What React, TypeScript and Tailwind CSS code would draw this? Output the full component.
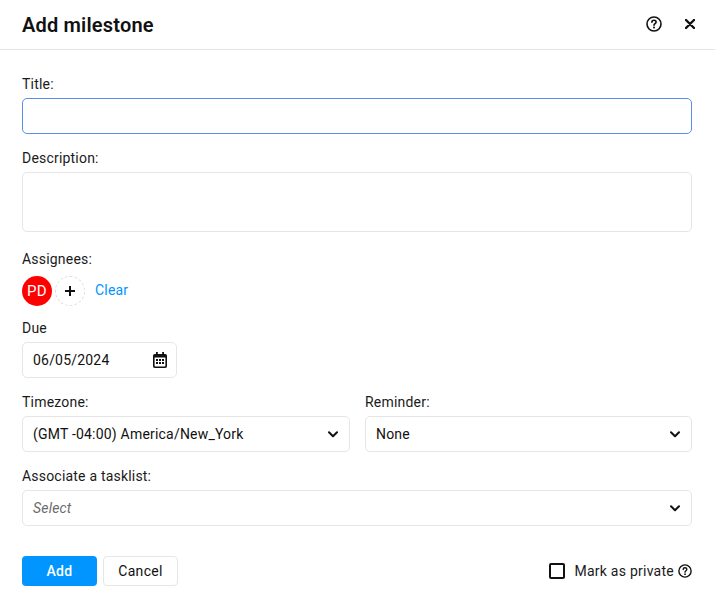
import React from "react";

const Chevron = () => (
  <svg width="10" height="7" viewBox="0 0 10 7" fill="none" className="shrink-0">
    <path d="M1 1.2 5 5.2l4-4" stroke="#111" strokeWidth="2" strokeLinecap="round" strokeLinejoin="round" />
  </svg>
);

const Help = ({ size }: { size: number }) => (
  <svg width={size} height={size} viewBox="0 0 16 16" fill="none" className="shrink-0">
    <circle cx="8" cy="8" r="7" stroke="#111" strokeWidth="1.6" />
    <path d="M5.9 6.2c0-1.2.9-1.9 2.1-1.9s2.1.7 2.1 1.8c0 1.6-2.1 1.6-2.1 3.2" stroke="#111" strokeWidth="1.6" strokeLinecap="round" />
    <circle cx="8" cy="11.6" r="1" fill="#111" />
  </svg>
);

const Label = ({ children }: { children: React.ReactNode }) => (
  <div className="h-[20px] leading-[20px] text-[14px] tracking-[0.2px] text-[#1a1a1a]">{children}</div>
);

const Select = ({ children, italic }: { children: string; italic?: boolean }) => (
  <div className="mt-[4px] h-[36px] flex items-center justify-between rounded-[5px] border border-[#e6e6e6] bg-white pl-[10px] pr-[11px]">
    <span className={italic ? "text-[14px] italic tracking-[0.2px] text-[#6b6b6b]" : "text-[14px] tracking-[0.2px] text-[#111]"}>{children}</span>
    <Chevron />
  </div>
);

export default function App() {
  return (
    <div className="w-[715px] h-[604px] bg-white overflow-hidden font-['Roboto',sans-serif]">
      <header className="h-[50px] border-b border-[#e5e5e5] flex items-center justify-between pl-[22px] pr-[20px]">
        <h1 className="text-[20px] font-semibold tracking-[0.18px] text-[#111]">Add milestone</h1>
        <div className="flex items-center gap-[23px] mb-[2px]">
          <Help size={16} />
          <svg width="10" height="10" viewBox="0 0 10 10" fill="none">
            <path d="M1 1l8 8M9 1 1 9" stroke="#111" strokeWidth="2.4" strokeLinecap="round" />
          </svg>
        </div>
      </header>

      <main className="px-[22px] pt-[24px] w-[714px]">
        <Label>Title:</Label>
        <div className="mt-[4px] h-[36px] rounded-[5px] border border-[#5b8def] bg-white" />

        <div className="mt-[14px]"><Label>Description:</Label></div>
        <div className="mt-[4px] h-[60px] rounded-[5px] border border-[#e6e6e6] bg-white" />

        <div className="mt-[17px]"><Label>Assignees:</Label></div>
        <div className="mt-[7px] flex items-center h-[30px]">
          <div className="w-[30px] h-[30px] rounded-full bg-[#ff0000] text-white text-[15px] tracking-[0.4px] flex items-center justify-center">PD</div>
          <div className="ml-[3px] w-[30px] h-[30px] rounded-full border border-dashed border-[#dcdcdc] flex items-center justify-center">
            <svg width="12" height="12" viewBox="0 0 12 12" fill="none">
              <path d="M6 1v10M1 6h10" stroke="#111" strokeWidth="2" />
            </svg>
          </div>
          <span className="ml-[10px] text-[14px] tracking-[0.2px] text-[#0095ff] mb-[1px]">Clear</span>
        </div>

        <div className="mt-[12px]"><Label>Due</Label></div>
        <div className="mt-[4px] w-[155px] h-[36px] flex items-center justify-between rounded-[5px] border border-[#e6e6e6] pl-[10px] pr-[9px]">
          <span className="text-[14px] tracking-[0.2px] text-[#111]">06/05/2024</span>
          <svg width="14" height="16" viewBox="0 0 14 16">
            <path fillRule="evenodd" fill="#111" d="M3 0h1.8v2h4.4V0H11v2h1.2A1.8 1.8 0 0 1 14 3.8v10.4a1.8 1.8 0 0 1-1.8 1.8H1.8A1.8 1.8 0 0 1 0 14.2V3.8A1.8 1.8 0 0 1 1.8 2H3V0ZM1.6 5.6v8.2c0 .4.2.6.6.6h9.6c.4 0 .6-.2.6-.6V5.6H1.6Z" />
            <path fill="#111" d="M3 7h2v2H3zM6 7h2v2H6zM9 7h2v2H9zM3 10h2v2H3zM6 10h2v2H6zM9 10h2v2H9z" />
          </svg>
        </div>

        <div className="mt-[14px] grid grid-cols-[328px_327px] gap-[15px]">
          <div>
            <Label>Timezone:</Label>
            <Select>(GMT -04:00) America/New_York</Select>
          </div>
          <div>
            <Label>Reminder:</Label>
            <Select>None</Select>
          </div>
        </div>

        <div className="mt-[14px]"><Label>Associate a tasklist:</Label></div>
        <Select italic>Select</Select>

        <div className="mt-[30px] flex items-center justify-between">
          <div className="flex items-center gap-[6px]">
            <button className="w-[75px] h-[30px] rounded-[4px] bg-[#0095ff] text-white text-[14px] font-medium tracking-[0.3px]">Add</button>
            <button className="w-[75px] h-[30px] rounded-[4px] border border-[#e6e6e6] bg-white text-[#111] text-[14px] tracking-[0.3px]">Cancel</button>
          </div>
          <div className="flex items-center">
            <span className="w-[16px] h-[16px] rounded-[2px] border-2 border-[#111] bg-white" />
            <span className="ml-[9px] mr-[4px] text-[14px] tracking-[0.25px] text-[#1a1a1a]">Mark as private</span>
            <Help size={14} />
          </div>
        </div>
      </main>
    </div>
  );
}
